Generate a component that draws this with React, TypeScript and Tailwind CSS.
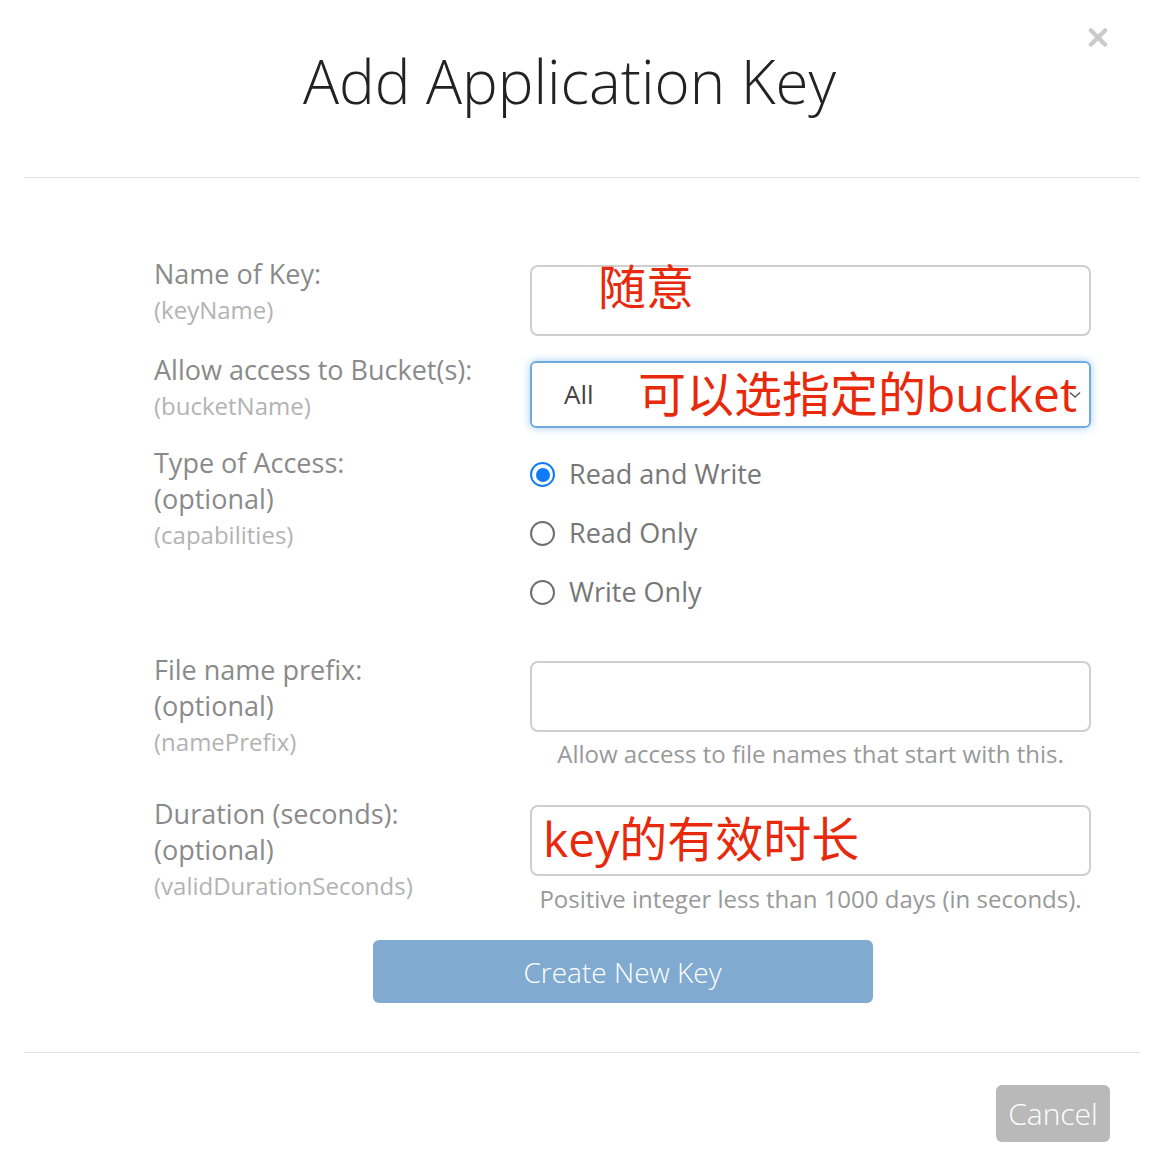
const font = { fontFamily: '"Open Sans", "Noto Sans CJK SC", sans-serif' };

function Label({ title, extra, field }: { title: string; extra?: string; field: string }) {
  return (
    <div className="text-[27px] leading-[36px] text-[#8a8a8a]">
      <div>{title}</div>
      {extra && <div>{extra}</div>}
      <div className="text-[24px] text-[#b3b3b3]">{field}</div>
    </div>
  );
}

function Radio({ label, checked }: { label: string; checked?: boolean }) {
  return (
    <div className="flex h-[59px] items-center gap-[14px]">
      {checked ? (
        <span className="flex h-[25px] w-[25px] items-center justify-center rounded-full border-[2.5px] border-[#0f7bf6]">
          <span className="h-[14px] w-[14px] rounded-full bg-[#0f7bf6]" />
        </span>
      ) : (
        <span className="h-[25px] w-[25px] rounded-full border-2 border-[#6f6f6f]" />
      )}
      <span className="text-[27px] text-[#777]">{label}</span>
    </div>
  );
}

function Annotation({ text, className }: { text: string; className: string }) {
  return (
    <span className={"pointer-events-none absolute whitespace-nowrap text-[#e8290c] " + className}>
      {text}
    </span>
  );
}

export default function App() {
  return (
    <div className="h-[1156px] w-[1158px] bg-white" style={font}>
      <div className="relative ml-[24px] mr-[18px] flex h-[178px] items-center justify-center border-b border-[#e2e2e2]">
        <h1 className="-mt-[16px] mr-[25px] text-[60px] font-light leading-none text-[#222]">Add Application Key</h1>
        <svg className="absolute right-[32px] top-[28px]" width="20" height="19" viewBox="0 0 20 19">
          <path d="M3 2.5 L17 16.5 M17 2.5 L3 16.5" stroke="#cbcbcb" strokeWidth="4.5" strokeLinecap="round" />
        </svg>
      </div>

      <div className="ml-[154px] w-[937px] pt-[78px]">
        <div className="grid grid-cols-[376px_561px]">
          <Label title="Name of Key:" field="(keyName)" />
          <div className="relative mt-[9px] h-[71px] rounded-[8px] border-2 border-[#cfcfcf]">
            <Annotation text="随意" className="left-[66px] -top-[16px] text-[48px]" />
          </div>
        </div>

        <div className="mt-[16px] grid grid-cols-[376px_561px]">
          <Label title="Allow access to Bucket(s):" field="(bucketName)" />
          <div className="relative mt-[9px] flex h-[67px] items-center rounded-[6px] border-2 border-[#72a9e3] pl-[32px] shadow-[0_0_8px_rgba(102,175,233,0.6)]">
            <span className="text-[26px] text-[#444]">All</span>
            <svg className="absolute right-[8px] top-[28px]" width="12" height="8" viewBox="0 0 12 8">
              <path d="M1 1.5 L6 6 L11 1.5" stroke="#555" strokeWidth="1.4" fill="none" />
            </svg>
            <Annotation text="可以选指定的bucket" className="left-[106px] -top-[5px] text-[48px]" />
          </div>
        </div>

        <div className="mt-[17px] grid grid-cols-[376px_561px]">
          <Label title="Type of Access:" extra="(optional)" field="(capabilities)" />
          <div>
            <Radio label="Read and Write" checked />
            <Radio label="Read Only" />
            <Radio label="Write Only" />
          </div>
        </div>

        <div className="mt-[30px] grid grid-cols-[376px_561px]">
          <Label title="File name prefix:" extra="(optional)" field="(namePrefix)" />
          <div className="mt-[9px]">
            <div className="h-[71px] rounded-[8px] border-2 border-[#cfcfcf]" />
            <p className="mt-[4px] text-center text-[24px] leading-[36px] text-[#999]">
              Allow access to file names that start with this.
            </p>
          </div>
        </div>

        <div className="mt-[24px] grid grid-cols-[376px_561px]">
          <Label title="Duration (seconds):" extra="(optional)" field="(validDurationSeconds)" />
          <div className="mt-[9px]">
            <div className="relative h-[71px] rounded-[8px] border-2 border-[#cfcfcf]">
              <Annotation text="key的有效时长" className="left-[11px] -top-[4px] text-[48px]" />
            </div>
            <p className="mt-[5px] text-center text-[24px] leading-[36px] text-[#999]">
              Positive integer less than 1000 days (in seconds).
            </p>
          </div>
        </div>

        <div className="mt-[23px] flex justify-center">
          <button className="h-[63px] w-[500px] rounded-[6px] bg-[#80aad0] text-[28px] font-light text-white">
            Create New Key
          </button>
        </div>
      </div>

      <div className="ml-[24px] mr-[18px] mt-[49px] flex justify-end border-t border-[#e2e2e2] pr-[30px] pt-[32px]">
        <button className="h-[57px] w-[114px] rounded-[6px] bg-[#b9b9b9] text-[30px] font-light text-white">
          Cancel
        </button>
      </div>
    </div>
  );
}
